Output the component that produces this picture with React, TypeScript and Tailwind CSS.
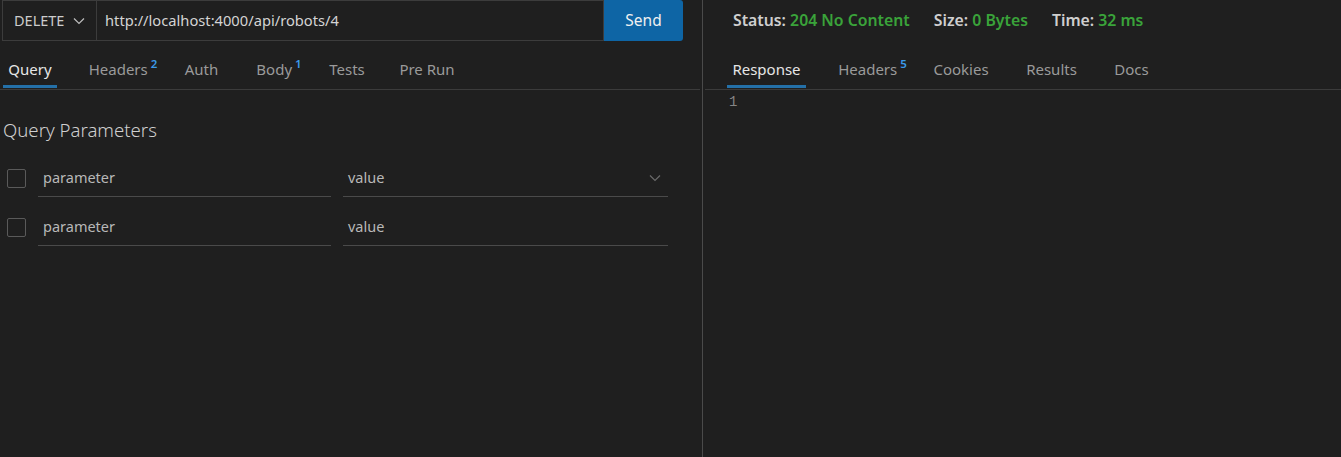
import React from "react";

const font = { fontFamily: '"Segoe UI", "Noto Sans", "Open Sans", sans-serif' };

function Chevron({ className = "" }: { className?: string }) {
  return (
    <svg width="12" height="8" viewBox="0 0 12 8" className={className} fill="none">
      <path d="M1 1.5 L6 6.5 L11 1.5" stroke="currentColor" strokeWidth="1.2" />
    </svg>
  );
}

function Tab({ label, sup, active, ml, w }: { label: string; sup?: string; active?: boolean; ml: string; w: string }) {
  return (
    <div className={`relative flex h-full items-center justify-center ${ml} ${w}`}>
      <span className={`text-[15px] ${active ? "text-[#e6e6e6]" : "text-[#9a9a9a]"}`}>
        {label}
        {sup && <sup className="ml-[3px] text-[11.5px] font-semibold text-[#3b9ae8] top-[-7px]">{sup}</sup>}
      </span>
      {active && <div className="absolute bottom-[1px] left-0 right-0 h-[3px] bg-[#2470a8]" />}
    </div>
  );
}

function Row({ chevron }: { chevron?: boolean }) {
  return (
    <div className="flex h-[49px] items-center">
      <div className="ml-[7px] h-[19px] w-[19px] rounded-[2px] border border-[#5a5a5a]" />
      <div className="ml-[12px] flex h-[38px] w-[293px] items-center border-b border-[#4a4a4a] pl-[5px] text-[14.5px] text-[#b8b8b8]">
        parameter
      </div>
      <div className="ml-[12px] flex h-[38px] w-[325px] items-center border-b border-[#4a4a4a] pl-[5px] text-[14.5px] text-[#b8b8b8]">
        <span className="flex-1">value</span>
        {chevron && <Chevron className="mr-[7px] text-[#6a6a6a]" />}
      </div>
    </div>
  );
}

export default function App() {
  return (
    <div className="flex h-[457px] w-[1341px] bg-[#1f1f1f]" style={font}>
      {/* Left panel */}
      <div className="flex w-[702px] flex-col">
        <div className="flex h-[41px] pl-[2px]">
          <div className="flex h-[41px] w-[95px] items-center justify-between border border-[#3c3c3c] pl-[11px] pr-[11px] text-[14.5px] text-[#cccccc]">
            <span>DELETE</span>
            <Chevron className="text-[#bdbdbd]" />
          </div>
          <div className="flex h-[41px] w-[507px] items-center border-y border-r border-[#3c3c3c] pl-[8px] text-[14.7px] text-[#d4d4d4]">
            http://localhost:4000/api/robots/4
          </div>
          <button className="flex h-[41px] w-[79px] items-center justify-center rounded-r-[3px] bg-[#0e65a5] text-[15.5px] text-[#f0f0f0]">
            Send
          </button>
        </div>
        <div className="mt-[8px] flex h-[41px] border-b border-[#3b3b3b] mr-[2px]">
          <Tab label="Query" active ml="ml-[3px]" w="w-[54px]" />
          <Tab label="Headers" sup="2" ml="ml-[31px]" w="w-[70px]" />
          <Tab label="Auth" ml="ml-[26px]" w="w-[35px]" />
          <Tab label="Body" sup="1" ml="ml-[36px]" w="w-[48px]" />
          <Tab label="Tests" ml="ml-[26px]" w="w-[36px]" />
          <Tab label="Pre Run" ml="ml-[33px]" w="w-[58px]" />
        </div>
        <div className="mt-[26px] pl-[3px] text-[18.6px] font-light text-[#cfcfcf]">Query Parameters</div>
        <div className="mt-[10px]">
          <Row chevron />
          <Row />
        </div>
      </div>
      {/* Divider */}
      <div className="w-[1px] bg-[#4a4a4a]" />
      {/* Right panel */}
      <div className="flex flex-1 flex-col">
        <div className="flex h-[41px] items-center pl-[30px] text-[15.8px] font-semibold text-[#cfcfcf]">
          <span>Status: <span className="text-[#3aa33a]">204 No Content</span></span>
          <span className="ml-[24px]">Size: <span className="text-[#3aa33a]">0 Bytes</span></span>
          <span className="ml-[24px]">Time: <span className="text-[#3aa33a]">32 ms</span></span>
        </div>
        <div className="mt-[8px] ml-[2px] flex h-[41px] border-b border-[#3b3b3b]">
          <Tab label="Response" active ml="ml-[22px]" w="w-[79px]" />
          <Tab label="Headers" sup="5" ml="ml-[31px]" w="w-[71px]" />
          <Tab label="Cookies" ml="ml-[24px]" w="w-[58px]" />
          <Tab label="Results" ml="ml-[36px]" w="w-[51px]" />
          <Tab label="Docs" ml="ml-[37px]" w="w-[35px]" />
        </div>
        <div className="pl-[26px] pt-[2px] text-[14px] text-[#858585]" style={{ fontFamily: '"Liberation Mono", monospace' }}>
          1
        </div>
      </div>
    </div>
  );
}
